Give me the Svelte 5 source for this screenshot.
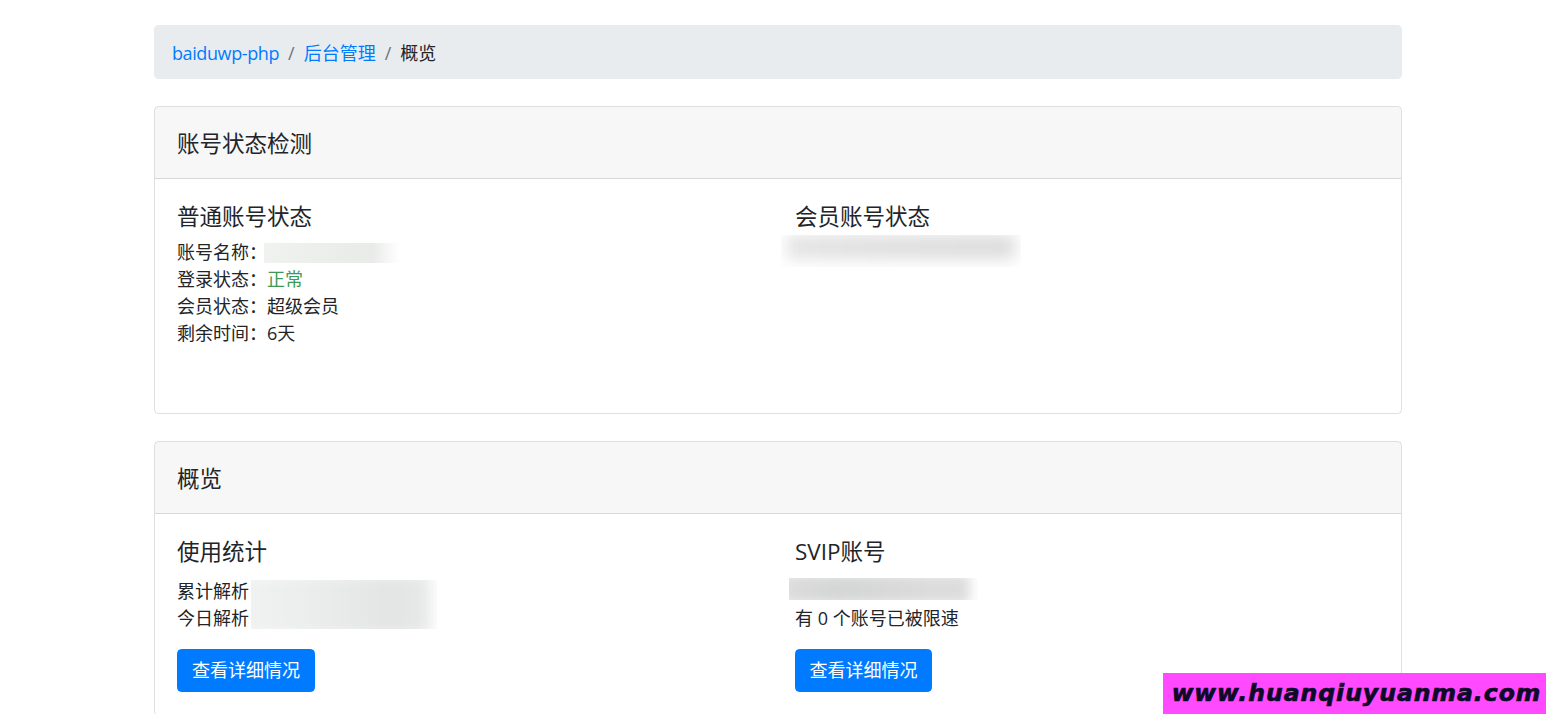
<script>
  const crumbs = ['baiduwp-php', '后台管理'];
  const accountRows = [
    { label: '登录状态：', value: '正常', ok: true },
    { label: '会员状态：', value: '超级会员' },
    { label: '剩余时间：', value: '6天' }
  ];
</script>

<main class="container">
  <nav class="breadcrumb">
    {#each crumbs as crumb}
      <a href="#top">{crumb}</a><span class="sep">/</span>
    {/each}
    <span>概览</span>
  </nav>

  <section class="card">
    <header class="card-header">账号状态检测</header>
    <div class="card-body columns">
      <div class="col">
        <h4>普通账号状态</h4>
        <p class="status">
          账号名称：<span class="smudge name"></span><br />
          {#each accountRows as row}
            {row.label}<span class:ok={row.ok}>{row.value}</span><br />
          {/each}
          <br />
        </p>
      </div>
      <div class="col">
        <h4>会员账号状态</h4>
        <div class="smudge member"><i></i></div>
      </div>
    </div>
  </section>

  <section class="card">
    <header class="card-header">概览</header>
    <div class="card-body columns">
      <div class="col">
        <h4>使用统计</h4>
        <p class="stats">累计解析<br />今日解析</p>
        <div class="smudge usage"><i></i></div>
        <a class="btn" href="#top">查看详细情况</a>
      </div>
      <div class="col">
        <h4>SVIP账号</h4>
        <div class="smudge svip"><i></i></div>
        <p class="stats limited">有 0 个账号已被限速</p>
        <a class="btn narrow" href="#top">查看详细情况</a>
      </div>
    </div>
  </section>
</main>

<div class="watermark">www.huanqiuyuanma.com</div>

<style>
  :global(body) {
    margin: 0;
    background: #fff;
    overflow: hidden;
    height: 714px;
  }
  .container {
    width: 1248px;
    margin-left: 154px;
    padding-top: 25px;
    font-family: "Open Sans", "Noto Sans CJK SC", sans-serif;
    font-size: 18px;
    line-height: 27px;
    color: #212529;
  }
  .breadcrumb {
    display: flex;
    background: #e9ecef;
    border-radius: 4.5px;
    padding: 14.5px 18px 12.5px;
    margin-bottom: 27px;
  }
  .breadcrumb a {
    color: #007bff;
    text-decoration: none;
  }
  .breadcrumb a:first-child {
    letter-spacing: -0.4px;
  }
  .sep {
    color: #6c757d;
    padding: 0 9px;
  }
  .card {
    border: 1px solid rgba(0, 0, 0, 0.125);
    border-radius: 4.5px;
    margin-bottom: 27px;
  }
  .card-header {
    background: rgba(0, 0, 0, 0.03);
    border-bottom: 1px solid rgba(0, 0, 0, 0.125);
    padding: 19.5px 22px 0;
    font-size: 22.5px;
    line-height: 33.75px;
    height: 72px;
    box-sizing: border-box;
    border-radius: 3.5px 3.5px 0 0;
  }
  .card-body {
    padding: 23.5px 22px 22.5px;
  }
  .columns {
    display: grid;
    grid-template-columns: 600px 1fr;
    column-gap: 18px;
  }
  .col {
    position: relative;
    min-width: 0;
  }
  h4 {
    margin: 0 0 9px;
    font-size: 22.5px;
    line-height: 27px;
    font-weight: 400;
  }
  .status {
    margin: 0 0 17px;
  }
  .ok {
    color: #3f9a55;
  }
  .stats {
    margin: 13.5px 0 17px;
  }
  .limited {
    margin: 0 0 17px;
  }
  .btn {
    display: inline-block;
    box-sizing: border-box;
    width: 138px;
    height: 43px;
    line-height: 41px;
    text-align: center;
    color: #fff;
    background: #007bff;
    border: 1px solid #007bff;
    border-radius: 4.5px;
    text-decoration: none;
  }
  .narrow {
    width: 137px;
  }
  .smudge {
    overflow: hidden;
  }
  .smudge i {
    display: block;
    height: 100%;
    filter: blur(7px);
  }
  .name {
    display: inline-block;
    vertical-align: top;
    width: 136px;
    height: 20px;
    margin: 4px 0 0 -3px;
    background: linear-gradient(90deg, #f0f2f0 0, #e9ebe9 80%, #fff 100%);
  }
  .member {
    position: absolute;
    left: -14px;
    top: 32.5px;
    width: 240px;
    height: 32px;
  }
  .member i {
    margin: 0 6px 8px;
    height: 24px;
    background: linear-gradient(90deg, #e2e3e2, #dddedd 50%, #dadbda);
    filter: blur(8px);
  }
  .usage {
    position: absolute;
    left: 74px;
    top: 42.5px;
    width: 186px;
    height: 49px;
  }
  .usage i {
    margin: -6px 6px -6px -12px;
    height: 61px;
    background: linear-gradient(90deg, #f1f2f2 0, #ebecec 40%, #e3e4e4 80%, #e8e9e9 100%);
  }
  .svip {
    margin: 13px 0 5px -6px;
    width: 189px;
    height: 22px;
  }
  .svip i {
    margin: -4px 8px -4px -8px;
    height: 30px;
    background: linear-gradient(90deg, #dddddd, #d4d5d5 30%, #dcdcdc 80%);
    filter: blur(6px);
  }
  .watermark {
    position: fixed;
    right: 0;
    bottom: 0;
    box-sizing: border-box;
    width: 383px;
    height: 41px;
    padding-left: 4px;
    background: #ff4aff;
    color: #0d0a2a;
    font-family: "DejaVu Sans", sans-serif;
    font-weight: 700;
    font-style: italic;
    font-size: 23.5px;
    letter-spacing: 1px;
    -webkit-text-stroke: 0.7px #0d0a2a;
    line-height: 41px;
    text-align: center;
    white-space: nowrap;
  }
</style>
